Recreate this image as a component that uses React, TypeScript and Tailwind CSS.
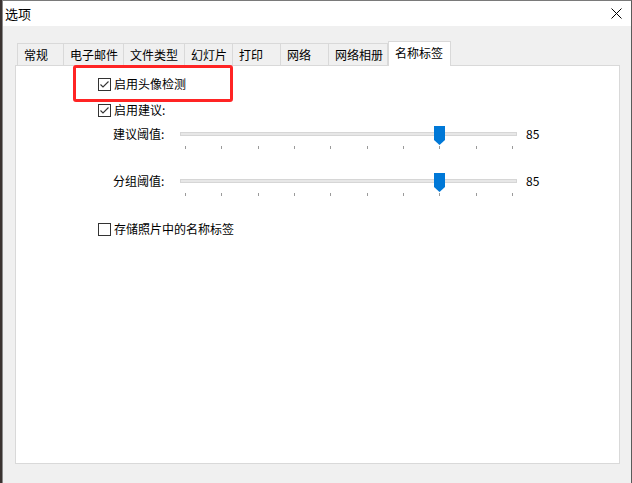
import React from "react";

const font = { fontFamily: '"Noto Sans CJK SC", "Microsoft YaHei", sans-serif' };

function Check({ checked }: { checked: boolean }) {
  return (
    <div className="w-[13px] h-[13px] border border-[#333333] bg-white flex items-center justify-center shrink-0">
      {checked && (
        <svg width="11" height="11" viewBox="0 0 11 11">
          <path d="M1.5 5.5 L4 8 L9.5 2.5" stroke="#333333" strokeWidth="1.1" fill="none" />
        </svg>
      )}
    </div>
  );
}

function CheckRow({ checked, label, className }: { checked: boolean; label: string; className?: string }) {
  return (
    <div className={"flex items-center h-[20px] " + (className ?? "")}>
      <Check checked={checked} />
      <span className="ml-[3px] text-[12px] leading-[20px] text-black">{label}</span>
    </div>
  );
}

function Slider({ label, value, className }: { label: string; value: number; className?: string }) {
  const ticks = Array.from({ length: 10 });
  return (
    <div className={"flex items-start pl-[15px] " + (className ?? "")}>
      <div className="w-[67px] h-[24px] flex items-center text-[12px] text-black">{label}</div>
      <div className="relative w-[337px] h-[30px]">
        <div className="absolute left-0 right-0 top-[10px] h-[4px] bg-[#e7e7e7] border border-[#d6d6d6]" />
        <div className="absolute left-[5px] w-[328px] top-[24px] h-[3px] flex justify-between">
          {ticks.map((_, i) => (
            <div key={i} className="w-px h-[3px] bg-[#9a9a9a]" />
          ))}
        </div>
        <svg className="absolute left-[254px] top-[4px]" width="11" height="19" viewBox="0 0 11 19">
          <path d="M0 0 H11 V14 L5.5 19 L0 14 Z" fill="#0078d7" />
        </svg>
      </div>
      <div className="h-[24px] flex items-center ml-[9px] text-[12px] text-black">{value}</div>
    </div>
  );
}

const tabs = [
  { t: "常规", w: 47 },
  { t: "电子邮件", w: 60 },
  { t: "文件类型", w: 61 },
  { t: "幻灯片", w: 48 },
  { t: "打印", w: 48 },
  { t: "网络", w: 48 },
  { t: "网络相册", w: 59 },
];

export default function App() {
  return (
    <div className="relative w-[632px] h-[483px] flex bg-[#f0f0f0] overflow-hidden" style={font}>
      <div className="w-[2px] bg-[#3a3331]" />
      <div className="flex-1 flex flex-col border-l border-t border-r border-l-[#8a8a8a] border-t-[#7a7a7a] border-r-[#5a5a5a]">
        {/* title bar */}
        <div className="h-[25px] bg-white flex items-center justify-between pl-[2px] pr-[9px]">
          <span className="text-[13px] text-black leading-none">选项</span>
          <svg width="11" height="11" viewBox="0 0 11 11">
            <path d="M0.5 0.5 L10.5 10.5 M10.5 0.5 L0.5 10.5" stroke="#000" strokeWidth="1" />
          </svg>
        </div>
        {/* body */}
        <div className="flex-1 flex flex-col pl-[12px] pr-[11px] pt-[15px]">
          <div className="flex items-end h-[24px] pl-[2px] relative z-10">
            {tabs.map((tab, i) => (
              <div
                key={tab.t}
                className={
                  "h-[22px] flex items-center justify-start pl-[6px] text-[12px] text-black border-t border-[#d9d9d9] " +
                  (i === 0 ? "border-l " : "") +
                  "border-r bg-[#f0f0f0]"
                }
                style={{ width: tab.w }}
              >
                {tab.t}
              </div>
            ))}
            <div className="h-[25px] w-[63px] -mb-px flex items-center justify-start pl-[6px] text-[12px] text-black bg-white border-t border-l border-r border-[#d9d9d9] pb-[2px]">
              名称标签
            </div>
          </div>
          <div className="w-[605px] h-[399px] bg-white border border-[#d9d9d9] pl-[82px] pt-[8px]">
            <CheckRow checked label="启用头像检测" />
            <CheckRow checked label="启用建议:" className="mt-[6px]" />
            <Slider label="建议阈值:" value={85} className="mt-[2px]" />
            <Slider label="分组阈值:" value={85} className="mt-[17px]" />
            <CheckRow checked={false} label="存储照片中的名称标签" className="mt-[20px]" />
          </div>
        </div>
      </div>
      {/* annotation */}
      <div className="absolute left-[73px] top-[65px] w-[160px] h-[37px] border-[3px] border-[#ff2424] rounded-[3px] z-20" />
    </div>
  );
}
